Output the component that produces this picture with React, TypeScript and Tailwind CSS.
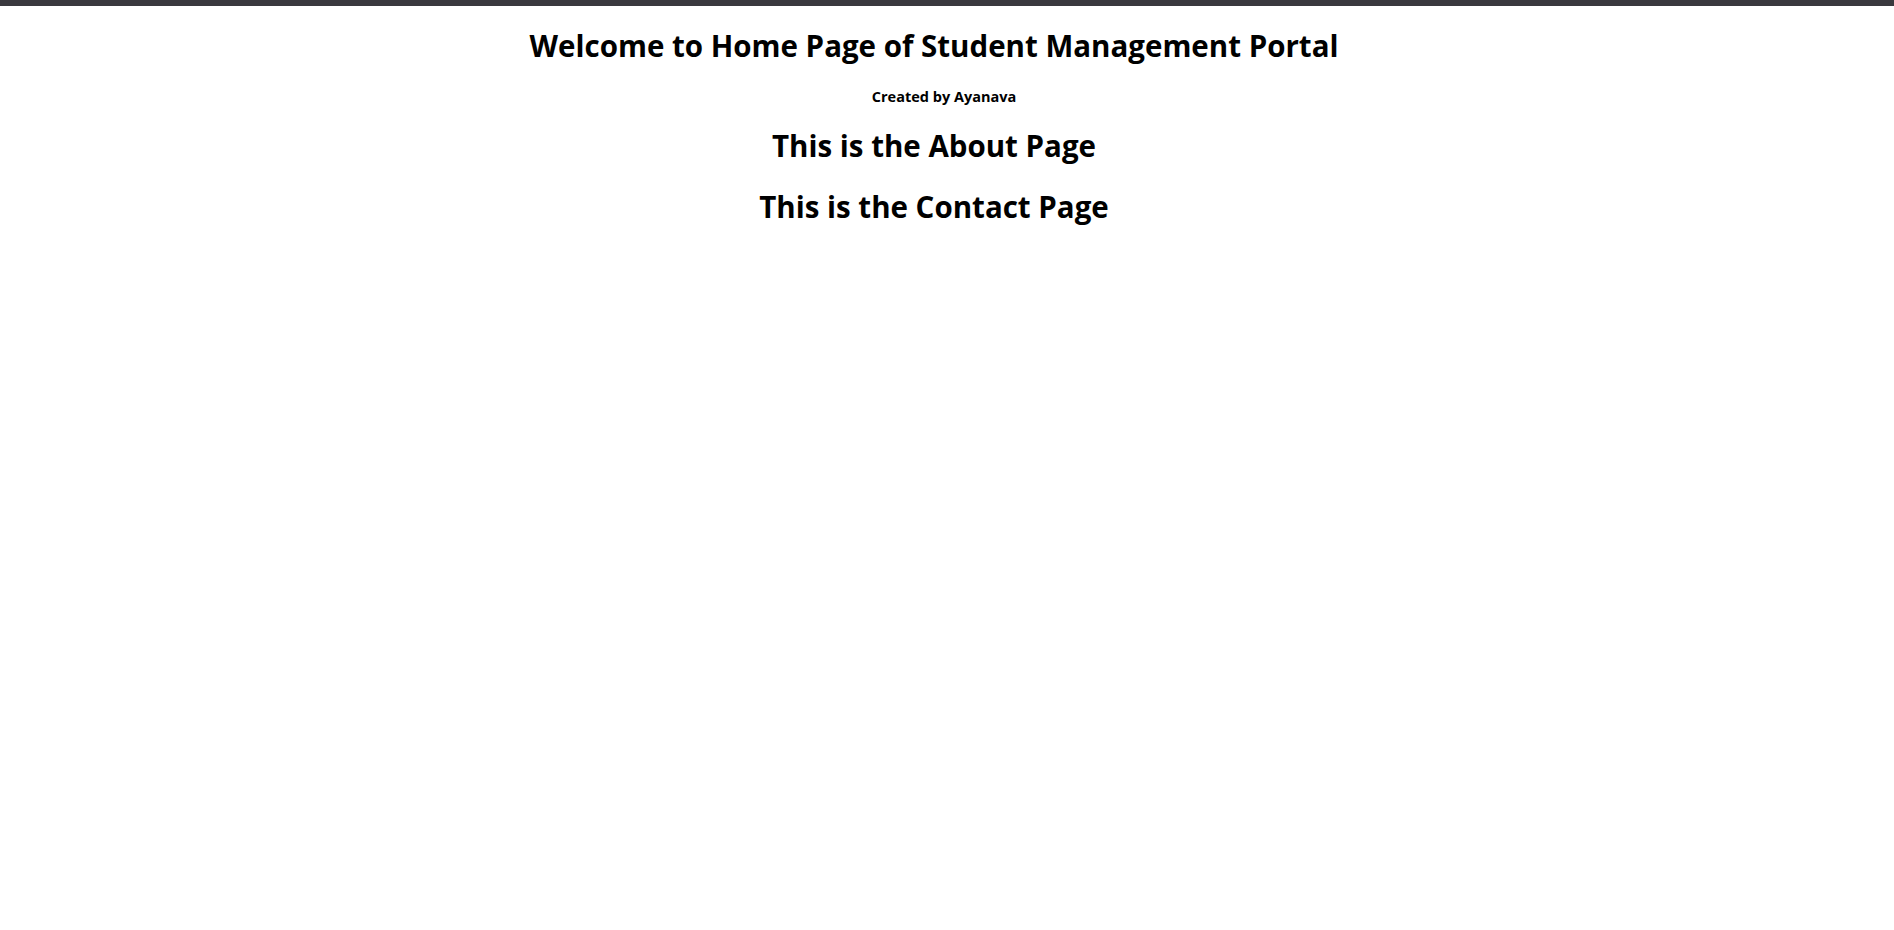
export default function App() {
  return (
    <div className="min-h-screen bg-white text-black" style={{ fontFamily: '"Open Sans", sans-serif' }}>
      <div className="h-[6px] bg-[#3a393e]" />
      <div className="flex flex-col items-center">
        <h1 className="mt-[22px] text-[29.5px] font-bold leading-[36px] -translate-x-[13px]">Welcome to Home Page of Student Management Portal</h1>
        <p className="mt-[24px] text-[14.5px] font-bold leading-[18px] -translate-x-[3px]">Created by Ayanava</p>
        <h1 className="mt-[20px] text-[29.5px] font-bold leading-[40px] -translate-x-[13px]">This is the About Page</h1>
        <h1 className="mt-[21px] text-[29.5px] font-bold leading-[40px] -translate-x-[13px]">This is the Contact Page</h1>
      </div>
    </div>
  );
}
